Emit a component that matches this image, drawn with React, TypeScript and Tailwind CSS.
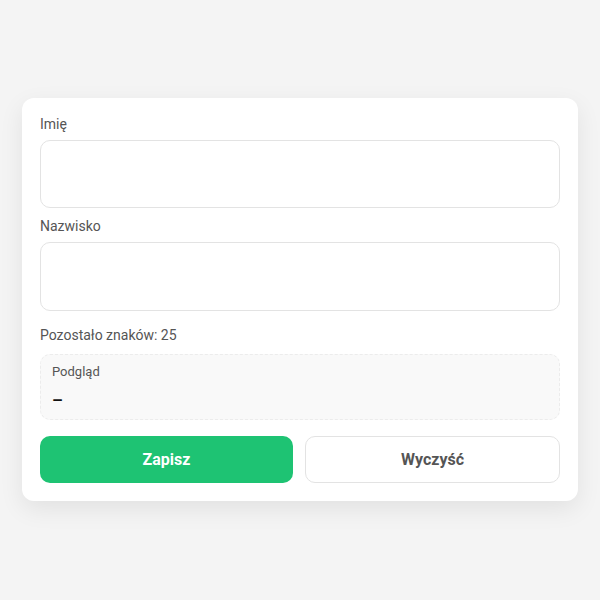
import React from "react";

export default function App() {
  return (
    <div className="min-h-[600px] w-[600px] bg-[#f4f4f4] flex flex-col items-center pt-[98px]" style={{ fontFamily: "Roboto, 'Liberation Sans', sans-serif" }}>
      <div className="w-[556px] bg-white rounded-[12px] shadow-[0_8px_24px_rgba(0,0,0,0.08)] p-[18px] flex flex-col">
        <label className="text-[14px] leading-[16px] text-[#555] mb-[8px]">Imię</label>
        <input className="h-[68px] w-full rounded-[10px] border border-[#e3e3e3] bg-white px-3 outline-none" />
        <label className="text-[14px] leading-[18px] text-[#555] mt-[9px] mb-[7px]">Nazwisko</label>
        <input className="h-[69px] w-full rounded-[10px] border border-[#e3e3e3] bg-white px-3 outline-none" />
        <div className="text-[14px] leading-[18px] text-[#555] mt-[15px]">Pozostało znaków: 25</div>
        <div className="mt-[10px] h-[66px] rounded-[10px] border border-dashed border-[#ececec] bg-[#f9f9f9] px-[11px] pt-[9px]">
          <div className="text-[13px] leading-[16px] text-[#555]">Podgląd</div>
          <div className="mt-[10px] text-[17px] leading-[20px] font-bold text-[#111]">–</div>
        </div>
        <div className="mt-[16px] flex gap-[12px]">
          <button className="flex-1 h-[47px] rounded-[10px] bg-[#1ec373] text-white text-[16px] font-bold">Zapisz</button>
          <button className="flex-1 h-[47px] rounded-[10px] bg-white border border-[#e3e3e3] text-[#555] text-[16px] font-bold">Wyczyść</button>
        </div>
      </div>
    </div>
  );
}
